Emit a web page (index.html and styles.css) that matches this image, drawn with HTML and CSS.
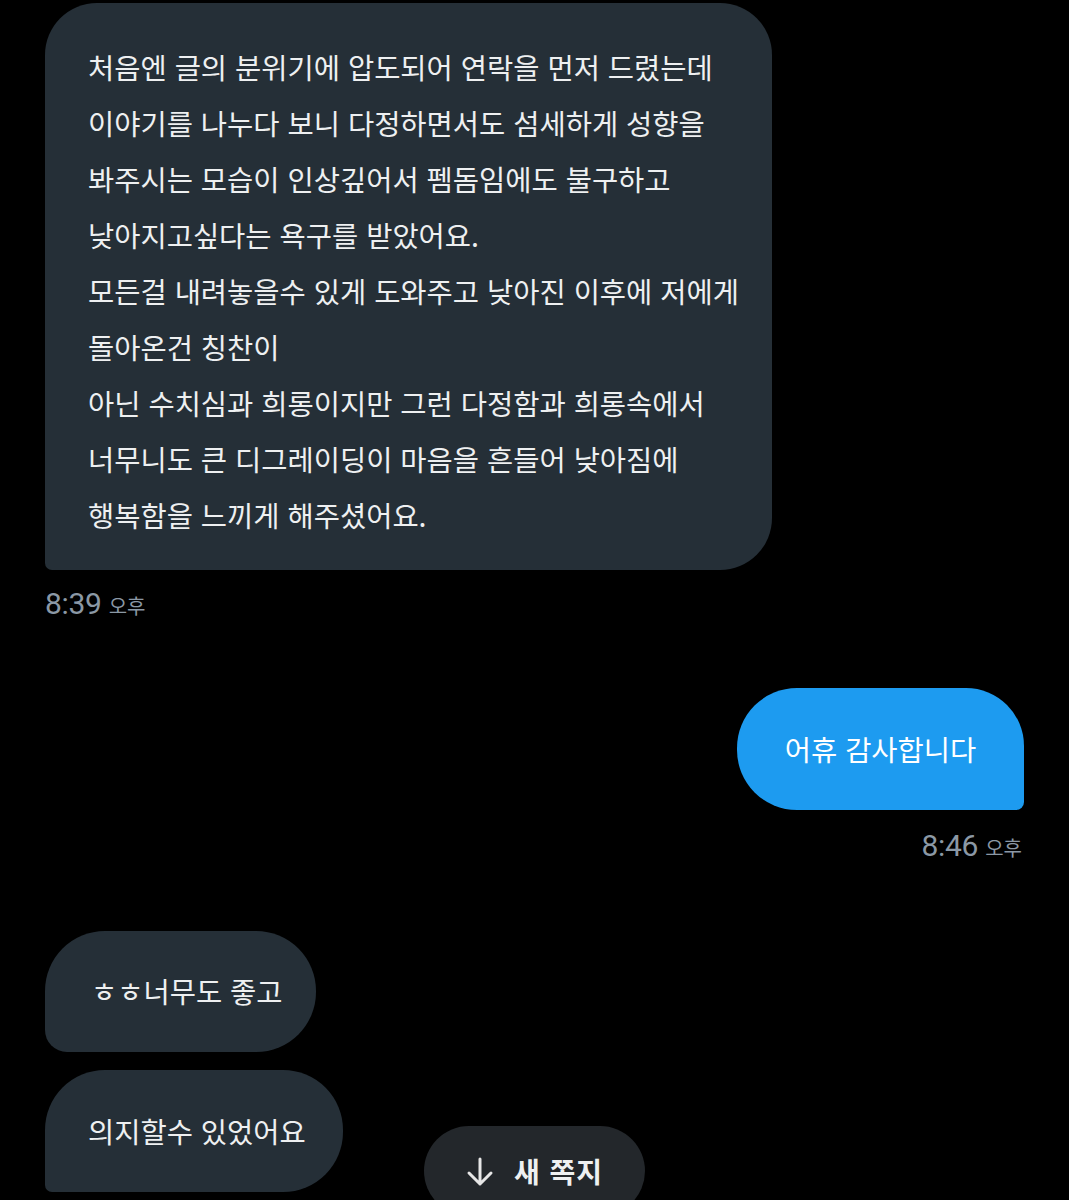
FILE: index.html
```html
<!DOCTYPE html>
<html lang="ko">
<head>
<meta charset="utf-8">
<title>쪽지</title>
<link rel="stylesheet" href="styles.css">
</head>
<body>
<main class="chat">
  <div class="group in">
    <div class="bubble recv big">
      <span class="line">처음엔 글의 분위기에 압도되어 연락을 먼저 드렸는데</span>
      <span class="line">이야기를 나누다 보니 다정하면서도 섬세하게 성향을</span>
      <span class="line">봐주시는 모습이 인상깊어서 펨돔임에도 불구하고</span>
      <span class="line">낮아지고싶다는 욕구를 받았어요.</span>
      <span class="line">모든걸 내려놓을수 있게 도와주고 낮아진 이후에 저에게</span>
      <span class="line">돌아온건 칭찬이</span>
      <span class="line">아닌 수치심과 희롱이지만 그런 다정함과 희롱속에서</span>
      <span class="line">너무니도 큰 디그레이딩이 마음을 흔들어 낮아짐에</span>
      <span class="line">행복함을 느끼게 해주셨어요.</span>
    </div>
    <div class="time"><span class="num">8:39</span><span class="ampm">오후</span></div>
  </div>

  <div class="group out">
    <div class="bubble sent">어휴 감사합니다</div>
    <div class="time"><span class="num">8:46</span><span class="ampm">오후</span></div>
  </div>

  <div class="group in second">
    <div class="bubble recv first">ㅎㅎ너무도 좋고</div>
    <div class="bubble recv last">의지할수 있었어요</div>
  </div>
</main>

<button class="new-msg" type="button">
  <svg class="arrow" viewBox="0 0 28 30" width="28" height="30" aria-hidden="true">
    <path d="M14 2 V27 M3 16 L14 27 L25 16" fill="none" stroke="#e6e6e6" stroke-width="3" stroke-linecap="round" stroke-linejoin="round"/>
  </svg>
  <span class="label">새 쪽지</span>
</button>
</body>
</html>
```

FILE: styles.css
```css
html, body {
  margin: 0;
  padding: 0;
  background: #000;
  height: 1200px;
  overflow: hidden;
}

body {
  font-family: "Noto Sans CJK KR", "Noto Sans", sans-serif;
  color: #eef0f1;
  position: relative;
}

.chat {
  display: flex;
  flex-direction: column;
  padding: 3px 45px 0 45px;
}

.group {
  display: flex;
  flex-direction: column;
}

.group.in {
  align-items: flex-start;
}

.group.out {
  align-items: flex-end;
  margin-top: 67px;
}

.group.second {
  margin-top: 68px;
  gap: 18px;
}

.bubble {
  font-size: 28.5px;
  line-height: 56px;
  white-space: nowrap;
  box-sizing: border-box;
}

.recv {
  background: #252f37;
}

.big {
  width: 727px;
  padding: 36px 20px 27px 43px;
  border-radius: 52px 52px 52px 7px;
  display: flex;
  flex-direction: column;
}

.line {
  display: block;
}

.sent {
  background: #1d9bf0;
  color: #fff;
  width: 287px;
  height: 122px;
  padding: 33px 0;
  text-align: center;
  border-radius: 60px 58px 8px 60px;
}

.first {
  width: 271px;
  height: 121px;
  padding: 32px 0 0 46px;
  border-radius: 60px 60px 60px 22px;
}

.last {
  width: 298px;
  height: 122px;
  padding: 33px 0 0 43px;
  border-radius: 60px 60px 60px 7px;
}

.time {
  margin-top: 19px;
  line-height: 30px;
  color: #8b98a5;
  display: flex;
  align-items: baseline;
  gap: 7px;
}

.num {
  font-family: Roboto, "Liberation Sans", sans-serif;
  font-size: 30px;
  letter-spacing: -0.3px;
}

.ampm {
  font-size: 20px;
}

.group.out .time {
  margin-top: 21px;
  margin-right: 2px;
}

.new-msg {
  position: absolute;
  left: 424px;
  top: 1126px;
  width: 221px;
  height: 90px;
  border: none;
  border-radius: 45px;
  background: #23272b;
  color: #eef0f1;
  display: flex;
  align-items: flex-start;
  justify-content: center;
  gap: 20px;
  padding: 30px 0 0 0;
  font-family: "Noto Sans CJK KR", "Noto Sans", sans-serif;
}

.arrow {
  display: block;
  margin-top: 1px;
}

.label {
  font-size: 28px;
  font-weight: 700;
  line-height: 30px;
  letter-spacing: 1px;
}
```
